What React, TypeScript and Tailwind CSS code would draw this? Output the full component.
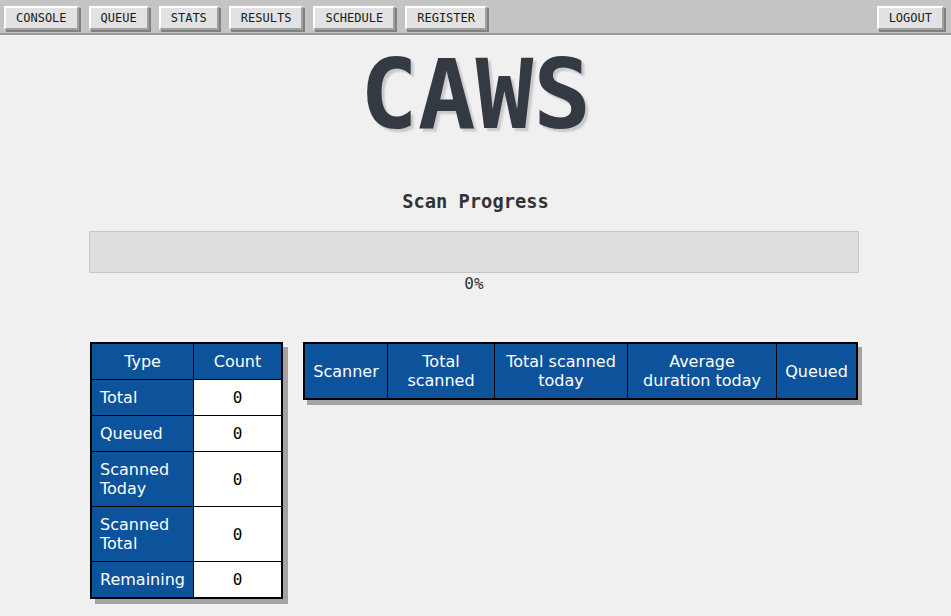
import React from "react";

const navItems = ["CONSOLE", "QUEUE", "STATS", "RESULTS", "SCHEDULE", "REGISTER"];

function NavButton({ label }: { label: string }) {
  return (
    <button className="h-[24px] px-[10px] flex items-center bg-[#e2e2e2] border-2 border-t-white border-l-white border-r-[#a0a0a0] border-b-[#a0a0a0] shadow-[2px_2px_0_#808080] text-[12px] leading-[14px] text-[#1a1a1a] font-['DejaVu_Sans_Mono',monospace]">
      {label}
    </button>
  );
}

const leftRows: { label: React.ReactNode; double?: boolean }[] = [
  { label: "Total" },
  { label: "Queued" },
  { label: <>Scanned<br />Today</>, double: true },
  { label: <>Scanned<br />Total</>, double: true },
  { label: "Remaining" },
];

export default function App() {
  return (
    <div className="min-h-[616px] bg-[#f0f0f0] font-['DejaVu_Sans',sans-serif] text-[#333]">
      <nav className="h-[35px] bg-[#c4c4c4] border-b-2 border-[#9a9a9a] flex items-start pt-[6px] pl-[4px] pr-[7px]">
        <div className="flex gap-[10px]">
          {navItems.map((n) => (
            <NavButton key={n} label={n} />
          ))}
        </div>
        <div className="ml-auto">
          <NavButton label="LOGOUT" />
        </div>
      </nav>

      <h1 className="mt-[4px] text-center font-['DejaVu_Sans_Mono',monospace] font-bold text-[96px] leading-[112px] text-[#343a43] [text-shadow:3px_3px_2px_#c9c9c9]">
        CAWS
      </h1>

      <h3 className="mt-[40px] text-center font-['DejaVu_Sans_Mono',monospace] font-bold text-[18.72px] leading-[22px] text-[#333]">
        Scan Progress
      </h3>

      <div className="w-[770px] ml-[89px] mt-[18px]">
        <div className="h-[42px] bg-[#dddddd] border border-[#c6c6c6]" />
        <div className="mt-[1px] text-center font-['DejaVu_Sans_Mono',monospace] text-[16px] leading-[19px] text-[#333]">
          0%
        </div>

        <div className="flex items-start gap-[20px] mt-[49px] pl-[1px]">
          {/* Left table */}
          <div className="border-2 border-black shadow-[5px_5px_0_#a3a3a3] bg-black">
            <div className="grid grid-cols-[101px_87px] gap-px">
              <div className="bg-[#0c539b] text-white text-center text-[16px] leading-[19px] py-[8px]">Type</div>
              <div className="bg-[#0c539b] text-white text-center text-[16px] leading-[19px] py-[8px]">Count</div>
              {leftRows.map((r, i) => (
                <React.Fragment key={i}>
                  <div className="bg-[#0c539b] text-white text-[16px] leading-[19px] px-[8px] py-[8px] flex items-center">
                    <span>{r.label}</span>
                  </div>
                  <div className="bg-white text-black text-center font-['DejaVu_Sans_Mono',monospace] text-[16px] leading-[19px] flex items-center justify-center">
                    0
                  </div>
                </React.Fragment>
              ))}
            </div>
          </div>

          {/* Right table */}
          <div className="border-2 border-black shadow-[4px_5px_0_#a3a3a3] bg-black">
            <div className="grid grid-cols-[82px_106px_132px_148px_79px] gap-px">
              {[
                <>Scanner</>,
                <>Total<br />scanned</>,
                <>Total scanned<br />today</>,
                <>Average<br />duration today</>,
                <>Queued</>,
              ].map((h, i) => (
                <div
                  key={i}
                  className="bg-[#0c539b] text-white text-center text-[16px] leading-[19px] py-[8px] flex items-center justify-center"
                >
                  <span>{h}</span>
                </div>
              ))}
            </div>
          </div>
        </div>
      </div>
    </div>
  );
}
